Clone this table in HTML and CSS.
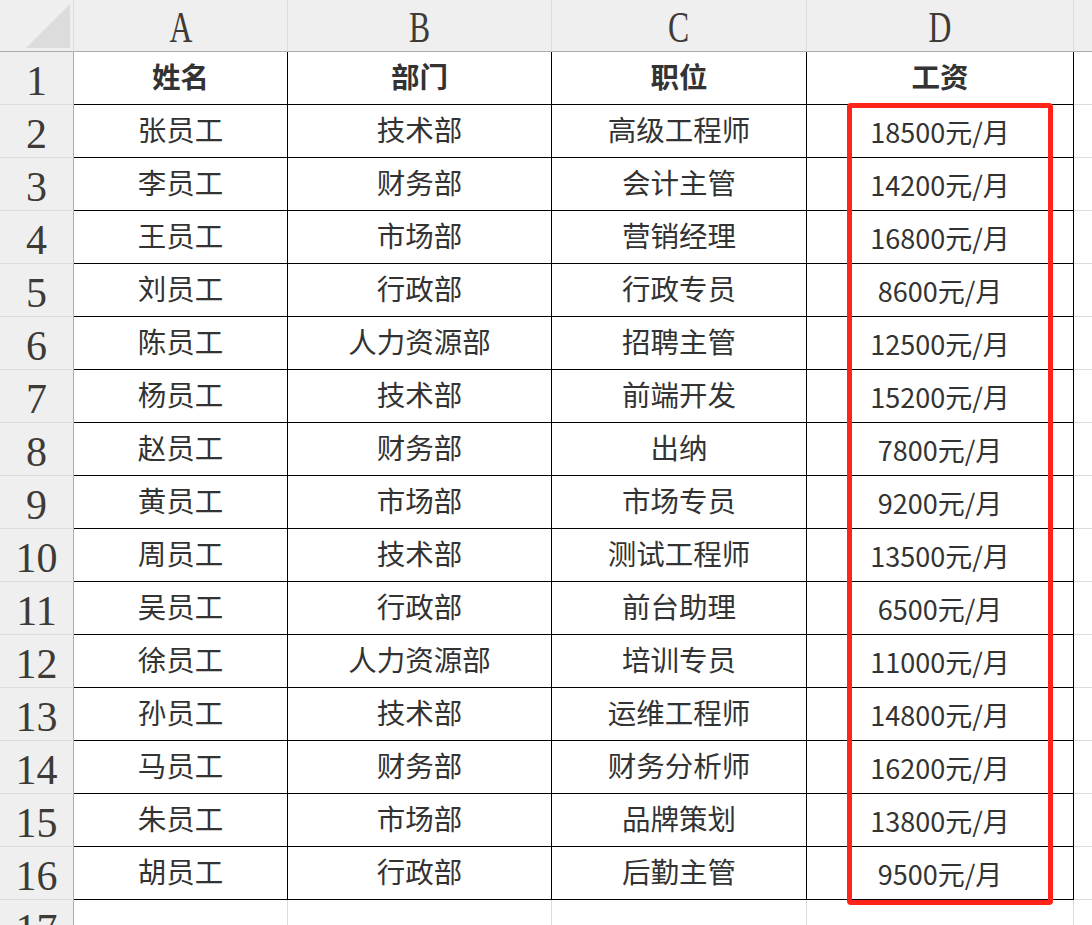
FILE: index.html
```html
<!DOCTYPE html>
<html lang="zh-CN">
<head>
<meta charset="utf-8">
<title>工资表</title>
<link rel="stylesheet" href="styles.css">
</head>
<body>
<div class="sheet">
  <div class="grid">
    <div class="corner"><span class="tri"></span></div>
    <div class="colhead"><span class="letter">A</span></div>
    <div class="colhead"><span class="letter">B</span></div>
    <div class="colhead"><span class="letter">C</span></div>
    <div class="colhead"><span class="letter">D</span></div>
    <div class="colhead last"></div>

    <div class="rowhead">1</div>
    <div class="cell bold">姓名</div><div class="cell bold">部门</div><div class="cell bold">职位</div><div class="cell bold">工资</div><div class="cell out"></div>

    <div class="rowhead">2</div>
    <div class="cell">张员工</div><div class="cell">技术部</div><div class="cell">高级工程师</div><div class="cell num">18500元/月</div><div class="cell out"></div>

    <div class="rowhead">3</div>
    <div class="cell">李员工</div><div class="cell">财务部</div><div class="cell">会计主管</div><div class="cell num">14200元/月</div><div class="cell out"></div>

    <div class="rowhead">4</div>
    <div class="cell">王员工</div><div class="cell">市场部</div><div class="cell">营销经理</div><div class="cell num">16800元/月</div><div class="cell out"></div>

    <div class="rowhead">5</div>
    <div class="cell">刘员工</div><div class="cell">行政部</div><div class="cell">行政专员</div><div class="cell num">8600元/月</div><div class="cell out"></div>

    <div class="rowhead">6</div>
    <div class="cell">陈员工</div><div class="cell">人力资源部</div><div class="cell">招聘主管</div><div class="cell num">12500元/月</div><div class="cell out"></div>

    <div class="rowhead">7</div>
    <div class="cell">杨员工</div><div class="cell">技术部</div><div class="cell">前端开发</div><div class="cell num">15200元/月</div><div class="cell out"></div>

    <div class="rowhead">8</div>
    <div class="cell">赵员工</div><div class="cell">财务部</div><div class="cell">出纳</div><div class="cell num">7800元/月</div><div class="cell out"></div>

    <div class="rowhead">9</div>
    <div class="cell">黄员工</div><div class="cell">市场部</div><div class="cell">市场专员</div><div class="cell num">9200元/月</div><div class="cell out"></div>

    <div class="rowhead">10</div>
    <div class="cell">周员工</div><div class="cell">技术部</div><div class="cell">测试工程师</div><div class="cell num">13500元/月</div><div class="cell out"></div>

    <div class="rowhead">11</div>
    <div class="cell">吴员工</div><div class="cell">行政部</div><div class="cell">前台助理</div><div class="cell num">6500元/月</div><div class="cell out"></div>

    <div class="rowhead">12</div>
    <div class="cell">徐员工</div><div class="cell">人力资源部</div><div class="cell">培训专员</div><div class="cell num">11000元/月</div><div class="cell out"></div>

    <div class="rowhead">13</div>
    <div class="cell">孙员工</div><div class="cell">技术部</div><div class="cell">运维工程师</div><div class="cell num">14800元/月</div><div class="cell out"></div>

    <div class="rowhead">14</div>
    <div class="cell">马员工</div><div class="cell">财务部</div><div class="cell">财务分析师</div><div class="cell num">16200元/月</div><div class="cell out"></div>

    <div class="rowhead">15</div>
    <div class="cell">朱员工</div><div class="cell">市场部</div><div class="cell">品牌策划</div><div class="cell num">13800元/月</div><div class="cell out"></div>

    <div class="rowhead">16</div>
    <div class="cell">胡员工</div><div class="cell">行政部</div><div class="cell">后勤主管</div><div class="cell num">9500元/月</div><div class="cell out"></div>

    <div class="rowhead">17</div>
    <div class="cell out"></div><div class="cell out"></div><div class="cell out"></div><div class="cell out"></div><div class="cell out"></div>
  </div>
  <div class="highlight"></div>
</div>
</body>
</html>
```

FILE: styles.css
```css
html, body {
  margin: 0;
  padding: 0;
  background: #ffffff;
  overflow: hidden;
}

.sheet {
  position: relative;
  width: 1092px;
  height: 925px;
  overflow: hidden;
}

.grid {
  display: grid;
  grid-template-columns: 74px 214px 264px 255px 267px 40px;
  grid-template-rows: 52px repeat(16, 53px) 53px;
}

.grid > div {
  box-sizing: border-box;
  display: flex;
  align-items: center;
  justify-content: center;
  overflow: hidden;
}

.corner {
  position: relative;
  background: #efefef;
  border-right: 1px solid #dcdcdc;
  border-bottom: 1px solid #acacac;
}

.tri {
  position: absolute;
  left: 26px;
  top: 4px;
  width: 44px;
  height: 44px;
  background: #dcdcdc;
  clip-path: polygon(100% 0, 100% 100%, 0 100%);
}

.colhead {
  background: #efefef;
  border-right: 1px solid #dcdcdc;
  border-bottom: 1px solid #acacac;
  font-family: "Liberation Serif", "DejaVu Serif", serif;
  font-size: 44px;
  color: #3e3a36;
}

.colhead .letter {
  display: inline-block;
  transform: scaleX(0.72);
  line-height: 1;
  padding-top: 4px;
}

.rowhead {
  background: #efefef;
  border-right: 1px solid #acacac;
  border-bottom: 1px solid #dcdcdc;
  font-family: "Liberation Serif", "DejaVu Serif", serif;
  font-size: 42px;
  color: #3e3a36;
  line-height: 1;
  padding-top: 6px;
}

.cell {
  border-right: 1px solid #000000;
  border-bottom: 1px solid #000000;
  font-family: "Noto Sans CJK SC", "Noto Sans", sans-serif;
  font-size: 28.5px;
  color: #333333;
  line-height: 1;
  padding-bottom: 3px;
}

.cell.bold {
  font-weight: 700;
}

.cell.num {
  padding-bottom: 0;
  font-size: 27px;
}

.cell.out {
  border-right: 1px solid #dcdcdc;
  border-bottom: 1px solid #dcdcdc;
}

.highlight {
  position: absolute;
  left: 847px;
  top: 103px;
  width: 206px;
  height: 802px;
  box-sizing: border-box;
  border: 5px solid #ff2419;
  border-radius: 4px;
}
```
